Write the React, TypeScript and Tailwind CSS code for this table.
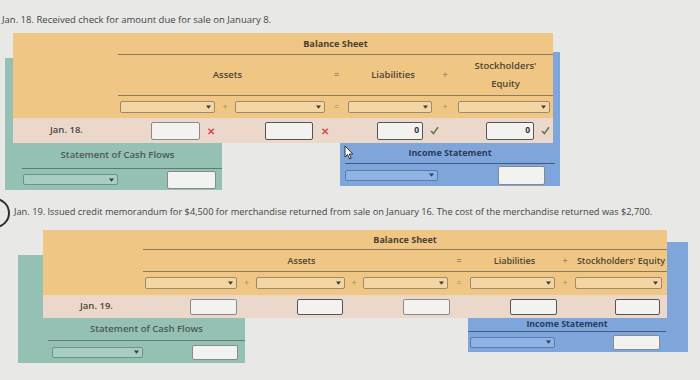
import type { ReactNode } from "react";

const font = "font-['Open_Sans',sans-serif]";

function Arrow({ color = "#3c3c3c" }: { color?: string }) {
  return (
    <svg width="5" height="4" viewBox="0 0 5 4" className="mr-[3px] shrink-0">
      <path d="M0 0.5 L5 0.5 L2.5 3.8 Z" fill={color} />
    </svg>
  );
}

function Select({ className, tone }: { className: string; tone: "orange" | "teal" | "blue" }) {
  const styles = {
    orange: "bg-[#f3d6a3] border-[#9b8a6c]",
    teal: "bg-[#a8cdc2] border-[#6e9189]",
    blue: "bg-[#8fb3e2] border-[#5a7cae]",
  };
  return (
    <div className={`flex items-center justify-end rounded-[2px] border ${styles[tone]} ${className}`}>
      <Arrow color={tone === "blue" ? "#2f3f5f" : "#3c3c3c"} />
    </div>
  );
}

function Input({ className, value, light }: { className: string; value?: string; light?: boolean }) {
  return (
    <div
      className={`flex items-center justify-end rounded-[2px] border-[1.5px] bg-[#f2f2f1] pr-[3px] text-[8.5px] font-bold text-[#333] ${
        light ? "border-[#8a8a8a]" : "border-[#555]"
      } ${className}`}
    >
      {value}
    </div>
  );
}

function Cross({ className }: { className: string }) {
  return <span className={`text-[10px] font-bold leading-none text-[#e0474c] ${className}`}>✕</span>;
}

function Check({ className }: { className: string }) {
  return (
    <svg width="9" height="9" viewBox="0 0 9 9" className={className}>
      <path d="M1 5 L3.4 7.6 L8 1.2" fill="none" stroke="#5f7a52" strokeWidth="1.6" />
    </svg>
  );
}

function Sym({ children }: { children: ReactNode }) {
  return <div className="flex items-center justify-center text-[9px] text-[#9a8a70]">{children}</div>;
}

export default function App() {
  return (
    <div className={`relative h-[380px] w-[700px] overflow-hidden bg-[#e8e8e6] text-[#3f3f3f] ${font}`}>
      <p className="pl-[2px] pt-[14px] text-[9.5px] leading-[12px] text-[#444]">
        Jan. 18. Received check for amount due for sale on January 8.
      </p>

      {/* Jan. 18 */}
      <div className="mt-[7px]">
        <div className="relative z-10 ml-[13px] w-[540px]">
          <div className="flex h-[85px] bg-[#f0c685]">
            <div className="w-[105px]" />
            <div className="w-[435px]">
              <div className="flex h-[22px] items-center justify-center border-b border-[#8c7a5a] text-[9.2px] font-bold text-[#4a4032]">
                Balance Sheet
              </div>
              <div className="grid h-[41px] grid-cols-[97px_20px_90px_23px_84px_26px_95px] border-b border-[#8c7a5a] text-[9.5px] font-semibold text-[#4d4536]">
                <div className="col-span-3 flex items-center justify-center pl-[12px]">Assets</div>
                <Sym>=</Sym>
                <div className="flex items-center justify-center pl-[6px]">Liabilities</div>
                <Sym>+</Sym>
                <div className="flex flex-col items-center justify-center leading-[18px]">
                  <span>Stockholders'</span>
                  <span>Equity</span>
                </div>
              </div>
              <div className="grid h-[21px] grid-cols-[97px_20px_90px_23px_84px_26px_95px] items-center">
                <Select tone="orange" className="ml-[2px] h-[12px]" />
                <Sym>+</Sym>
                <Select tone="orange" className="h-[12px]" />
                <Sym>=</Sym>
                <Select tone="orange" className="h-[12px]" />
                <Sym>+</Sym>
                <Select tone="orange" className="mr-[3px] h-[12px]" />
              </div>
            </div>
          </div>
          <div className="flex h-[25px] items-center bg-[#ebd8cb] text-[9.5px] font-semibold text-[#4a4540]">
            <span className="ml-[37px] w-[101px]">Jan. 18.</span>
            <Input light className="h-[18px] w-[49px]" />
            <Cross className="ml-[7px] w-[8px]" />
            <Input className="ml-[50px] h-[18px] w-[48px]" />
            <Cross className="ml-[8px] w-[7px]" />
            <Input className="ml-[49px] h-[18px] w-[46px]" value="0" />
            <Check className="ml-[7px]" />
            <Input className="ml-[47px] h-[18px] w-[48px]" value="0" />
            <Check className="ml-[7px]" />
          </div>
        </div>
        <div className="flex items-start">
          <div className="-mt-[85px] ml-[5px] h-[132px] w-[217px] bg-[#95c0b4] pt-[85px]">
            <div className="flex h-[25px] items-center justify-center pl-[8px] text-[9.6px] font-semibold text-[#4d5955]">
              Statement of Cash Flows
            </div>
            <div className="ml-[17px] h-px bg-[#5d7a73]" />
            <div className="flex h-[21px] items-center">
              <Select tone="teal" className="ml-[18px] h-[11px] w-[95px]" />
              <Input light className="ml-[49px] h-[18px] w-[49px]" />
            </div>
          </div>
          <div className="-mt-[91px] ml-[118px] h-[134px] w-[220px] bg-[#7fa6da] pt-[91px]">
            <div className="flex h-[20px] items-center justify-center text-[9px] font-bold text-[#2d3a58]">
              Income Statement
            </div>
            <div className="ml-[5px] h-px w-[210px] bg-[#3f5a86]" />
            <div className="flex h-[22px] items-center">
              <Select tone="blue" className="ml-[5px] h-[11px] w-[93px]" />
              <Input light className="ml-[60px] h-[19px] w-[47px]" />
            </div>
          </div>
        </div>
      </div>

      {/* mouse cursor */}
      <svg width="10" height="15" viewBox="0 0 10 15" className="absolute left-[344px] top-[145px] z-20">
        <path d="M1 1 L1 12 L3.6 9.6 L5.6 14 L7.2 13.3 L5.3 9 L8.8 9 Z" fill="#fff" stroke="#222" strokeWidth="0.9" />
      </svg>

      {/* Jan. 19 */}
      <div className="relative">
        <div className="absolute -left-[20px] top-[8px] h-[30px] w-[30px] rounded-full border-2 border-[#2e2e2e]" />
        <p className="whitespace-nowrap pl-[14px] pt-[16px] text-[9.25px] leading-[12px] text-[#444]">
          Jan. 19. Issued credit memorandum for $4,500 for merchandise returned from sale on January 16. The cost of the
          merchandise returned was $2,700.
        </p>
        <div className="mt-[12px]">
          <div className="relative z-10 ml-[43px] w-[624px]">
            <div className="flex h-[65px] bg-[#f0c685]">
              <div className="w-[100px]" />
              <div className="w-[524px]">
                <div className="flex h-[20px] items-center justify-center border-b border-[#8c7a5a] text-[9px] font-bold text-[#4a4032]">
                  Balance Sheet
                </div>
                <div className="grid h-[22px] grid-cols-[94px_19px_89px_18px_85px_22px_85px_20px_92px] border-b border-[#8c7a5a] text-[9px] font-semibold text-[#4d4536]">
                  <div className="col-span-5 flex items-center justify-center pl-[12px]">Assets</div>
                  <Sym>=</Sym>
                  <div className="flex items-center justify-center pl-[4px]">Liabilities</div>
                  <Sym>+</Sym>
                  <div className="flex items-center justify-center whitespace-nowrap">Stockholders' Equity</div>
                </div>
                <div className="grid h-[22px] grid-cols-[94px_19px_89px_18px_85px_22px_85px_20px_92px] items-center">
                  <Select tone="orange" className="ml-[2px] h-[12px]" />
                  <Sym>+</Sym>
                  <Select tone="orange" className="h-[12px]" />
                  <Sym>+</Sym>
                  <Select tone="orange" className="h-[12px]" />
                  <Sym>=</Sym>
                  <Select tone="orange" className="h-[12px]" />
                  <Sym>+</Sym>
                  <Select tone="orange" className="mr-[5px] h-[12px]" />
                </div>
              </div>
            </div>
            <div className="flex h-[23px] items-center bg-[#ebd8cb] text-[9.5px] font-semibold text-[#4a4540]">
              <span className="ml-[37px] w-[110px]">Jan. 19.</span>
              <Input light className="h-[16px] w-[47px]" />
              <Input className="ml-[60px] h-[16px] w-[46px]" />
              <Input light className="ml-[60px] h-[16px] w-[47px]" />
              <Input className="ml-[60px] h-[16px] w-[47px]" />
              <Input className="ml-[58px] h-[16px] w-[45px]" />
            </div>
          </div>
          <div className="flex items-start">
            <div className="-mt-[63px] ml-[18px] h-[108px] w-[227px] bg-[#95c0b4] pl-[30px] pt-[63px]">
              <div className="flex h-[22px] items-center justify-center text-[9.5px] font-semibold text-[#4d5955]">
                Statement of Cash Flows
              </div>
              <div className="h-px bg-[#5d7a73]" />
              <div className="flex h-[22px] items-center">
                <Select tone="teal" className="ml-[4px] h-[11px] w-[91px]" />
                <Input light className="ml-[49px] h-[15px] w-[46px]" />
              </div>
            </div>
            <div className="-mt-[76px] ml-[223px] h-[110px] w-[220px] bg-[#7fa6da] pr-[22px] pt-[76px]">
              <div className="flex h-[13px] items-center justify-center text-[8.8px] font-bold text-[#2d3a58]">
                Income Statement
              </div>
              <div className="h-px bg-[#3f5a86]" />
              <div className="flex h-[20px] items-center">
                <Select tone="blue" className="ml-[2px] h-[11px] w-[85px]" />
                <Input light className="ml-[58px] h-[15px] w-[47px]" />
              </div>
            </div>
          </div>
        </div>
      </div>
    </div>
  );
}
